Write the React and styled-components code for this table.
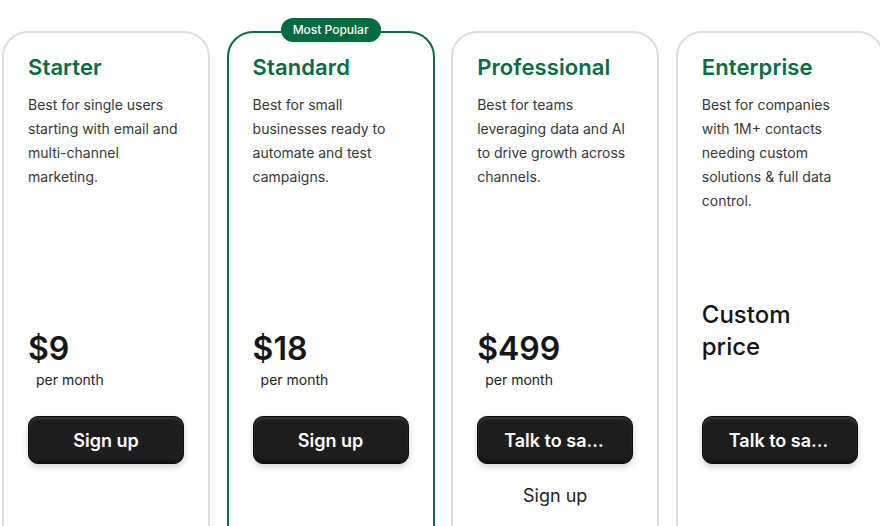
import styled, { createGlobalStyle } from "styled-components";

const GlobalStyle = createGlobalStyle`
  html, body {
    margin: 0;
    padding: 0;
    background: #ffffff;
    overflow: hidden;
  }
  body {
    font-family: Inter, "Noto Sans", "Liberation Sans", sans-serif;
    color: #1e1e1e;
  }
`;

const Page = styled.div`
  display: flex;
  gap: 16.6px;
  padding: 31px 0 0 2px;
  width: 900px;
  height: 526px;
  box-sizing: border-box;
`;

const Card = styled.div`
  position: relative;
  box-sizing: border-box;
  flex: 0 0 208px;
  height: 540px;
  border: 2px solid ${(props) => (props.$popular ? "#0b6b45" : "#dedede")};
  border-radius: 26px;
  padding: 20px 24px;
  display: flex;
  flex-direction: column;
`;

const Badge = styled.span`
  position: absolute;
  top: -15px;
  left: 50%;
  transform: translateX(-50%);
  background: #006b3e;
  color: #ffffff;
  font-size: 12px;
  line-height: 24px;
  height: 24px;
  padding: 0 12px;
  border-radius: 12px;
  white-space: nowrap;
  font-weight: 500;
`;

const Titulo = styled.h3`
  margin: 0;
  font-size: 22px;
  line-height: 28px;
  font-weight: 600;
  color: #0b6b45;
  letter-spacing: 0.1px;
`;

const Descricao = styled.p`
  margin: 12px 0 0;
  height: 200px;
  font-size: 14px;
  line-height: 24px;
  color: #383838;
`;

const PrecoArea = styled.div`
  height: 97px;
  box-sizing: border-box;
  padding-top: ${(props) => (props.$custom ? "6px" : "36px")};
`;

const Valor = styled.div`
  font-size: 32px;
  line-height: 40px;
  font-weight: 600;
  color: #161616;
`;

const Custom = styled.div`
  font-size: 24px;
  line-height: 32px;
  font-weight: 500;
  color: #161616;
`;

const Periodo = styled.div`
  margin: 1px 0 0 8px;
  font-size: 14px;
  line-height: 20px;
  color: #222;
`;

const Botao = styled.button`
  margin-top: 26px;
  width: 156px;
  height: 48px;
  box-sizing: border-box;
  border: 1px solid #0c0c0c;
  border-radius: 10px;
  background: #1d1d1d;
  box-shadow:
    inset 0 2px 3px rgba(255, 255, 255, 0.12),
    inset 0 -2px 3px rgba(0, 0, 0, 0.4),
    0 3px 6px rgba(0, 0, 0, 0.18);
  color: #ffffff;
  font-family: Inter, "Liberation Sans", sans-serif;
  font-size: 18px;
  font-weight: 600;
  padding: 0 26px;
  white-space: nowrap;
  overflow: hidden;
  text-overflow: ellipsis;
  cursor: pointer;
`;

const Link = styled.a`
  display: block;
  width: 156px;
  margin-top: 20px;
  text-align: center;
  font-size: 18px;
  line-height: 24px;
  color: #1e1e1e;
  text-decoration: none;
`;

const planos = [
  {
    titulo: "Starter",
    descricao: "Best for single users starting with email and multi-channel marketing.",
    preco: "$9",
    botao: "Sign up",
  },
  {
    titulo: "Standard",
    descricao: "Best for small businesses ready to automate and test campaigns.",
    preco: "$18",
    botao: "Sign up",
    popular: true,
  },
  {
    titulo: "Professional",
    descricao: "Best for teams leveraging data and AI to drive growth across channels.",
    preco: "$499",
    botao: "Talk to sales",
    link: "Sign up",
  },
  {
    titulo: "Enterprise",
    descricao: "Best for companies with 1M+ contacts needing custom solutions & full data control.",
    botao: "Talk to sales",
  },
];

const App = () => (
  <>
    <GlobalStyle />
    <Page>
      {planos.map((plano) => (
        <Card key={plano.titulo} $popular={plano.popular}>
          {plano.popular && <Badge>Most Popular</Badge>}
          <Titulo>{plano.titulo}</Titulo>
          <Descricao>{plano.descricao}</Descricao>
          <PrecoArea $custom={!plano.preco}>
            {plano.preco ? (
              <>
                <Valor>{plano.preco}</Valor>
                <Periodo>per month</Periodo>
              </>
            ) : (
              <Custom>
                Custom
                <br />
                price
              </Custom>
            )}
          </PrecoArea>
          <Botao>{plano.botao}</Botao>
          {plano.link && <Link href="#">{plano.link}</Link>}
        </Card>
      ))}
    </Page>
  </>
);

export default App;
